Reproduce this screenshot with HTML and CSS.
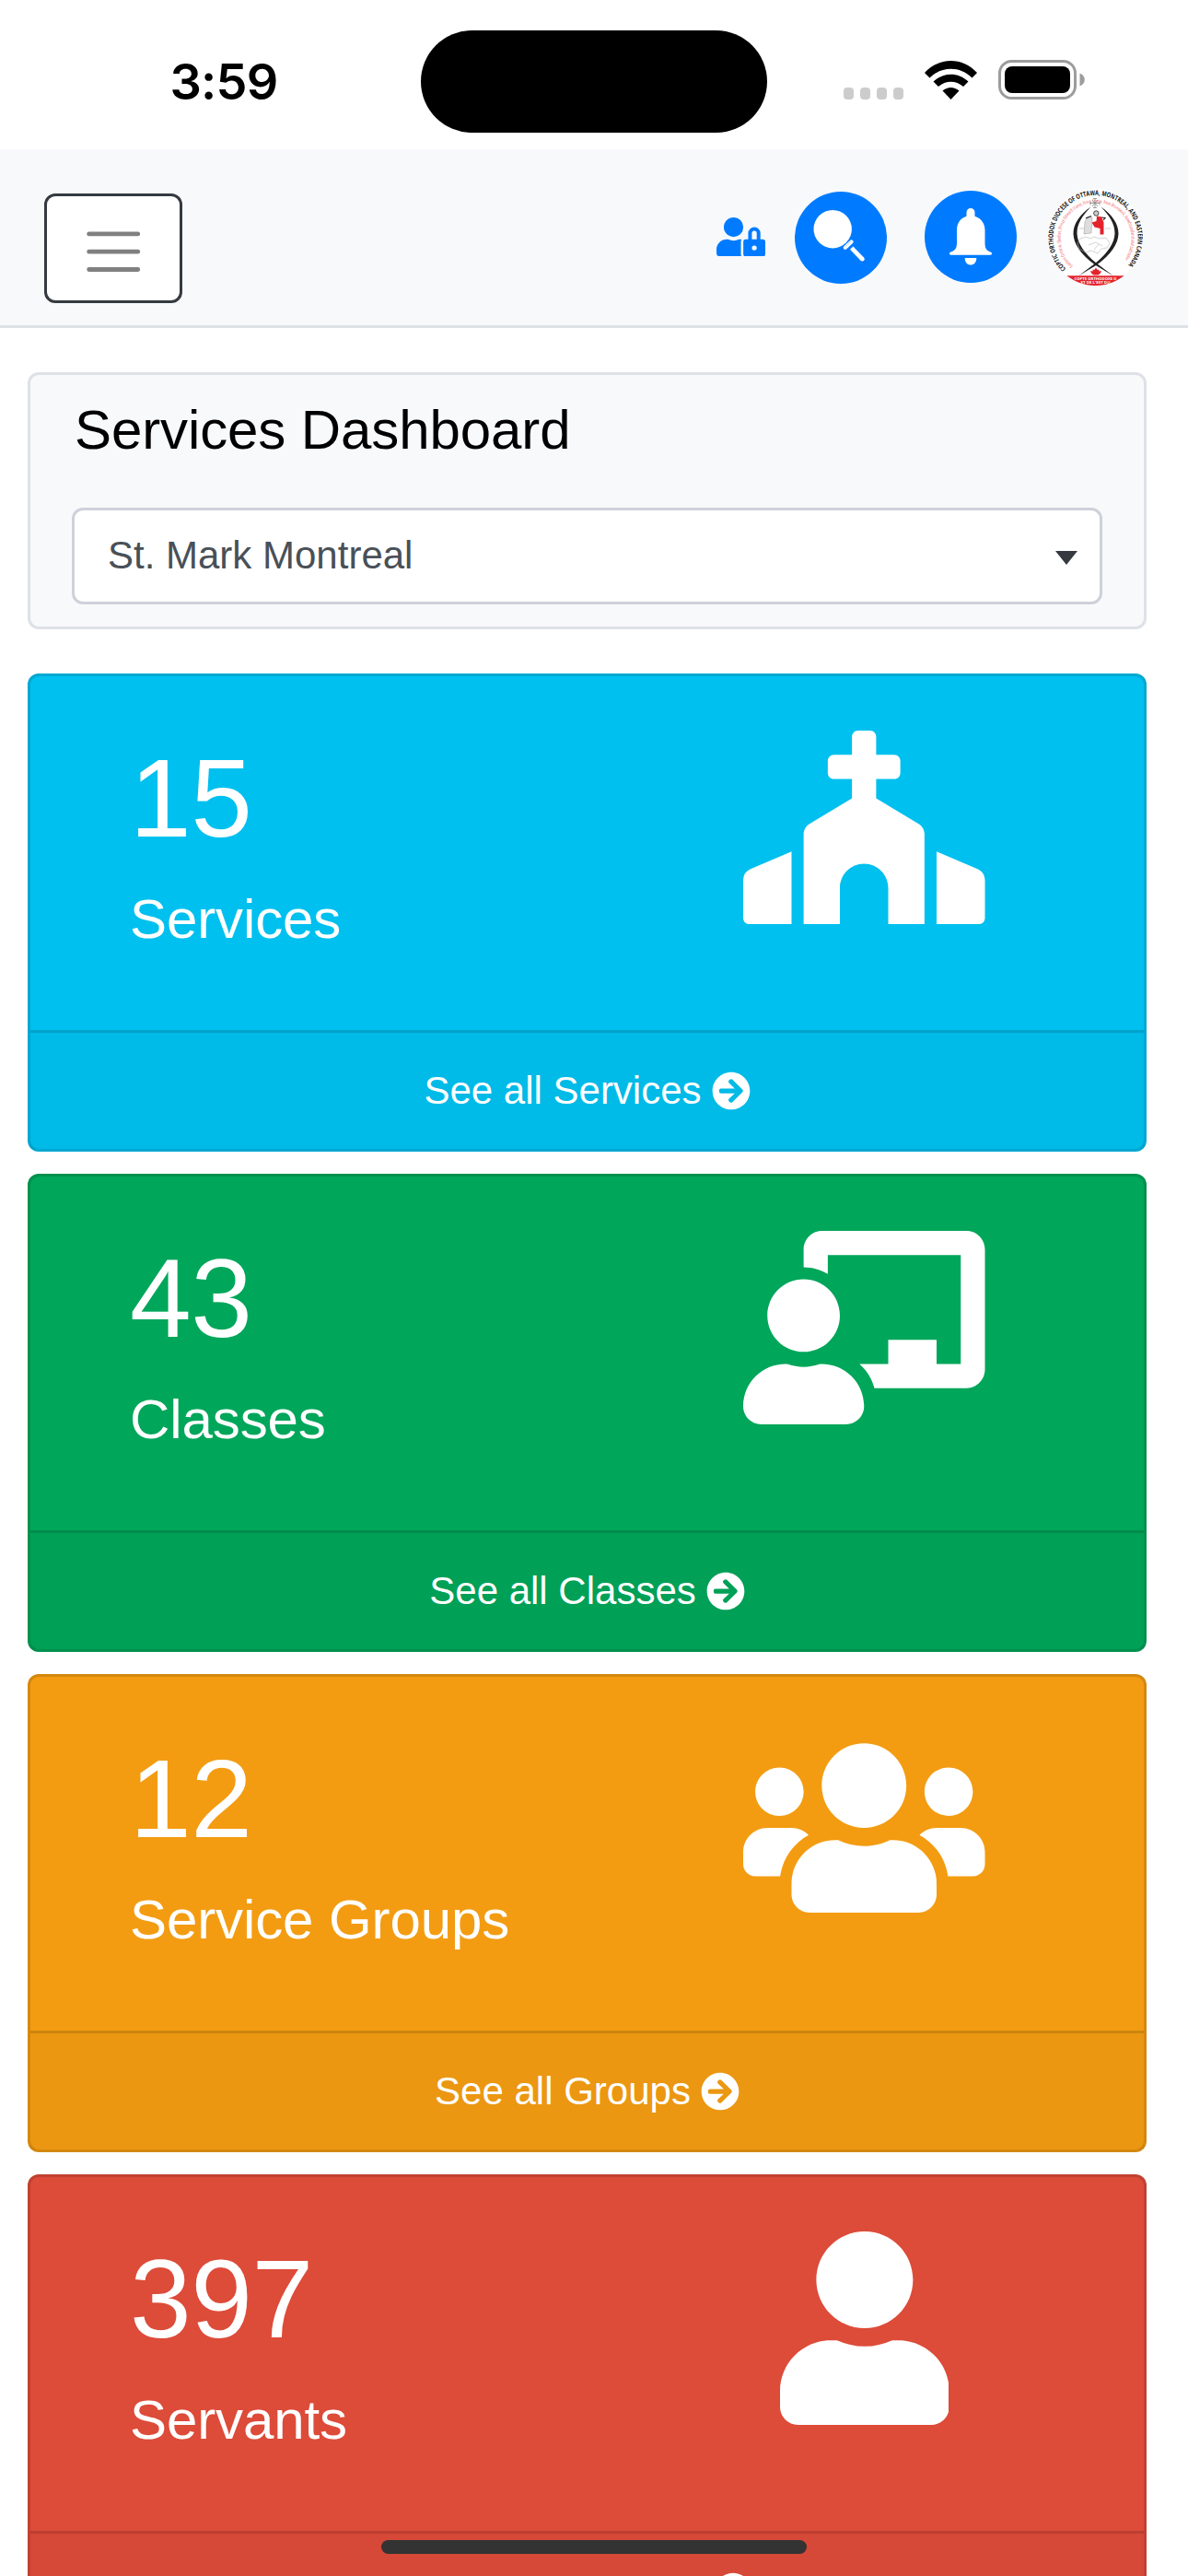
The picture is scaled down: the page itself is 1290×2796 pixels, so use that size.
FILE: index.html
```html
<!DOCTYPE html>
<html lang="en">
<head>
    <meta charset="UTF-8">
    <meta name="viewport" content="width=device-width, initial-scale=1.0">
    <title>Services Dashboard</title>
    <link rel="stylesheet" href="styles.css">
</head>
<body>

    <!-- Status bar -->
    <div class="status-bar">
        <div class="status-time">3:59</div>
        <div class="island"></div>
        <div class="status-icons">
            <div class="signal"><span></span><span></span><span></span><span></span></div>
            <svg class="wifi" viewBox="0 0 57 42">
                <path d="M0 13C16-4.300 41-4.300 57 13L51.500 18.500C38.500 5.500 18.500 5.500 5.500 18.500z"/>
                <path d="M9.500 22.500C20.500 12 36.500 12 47.500 22.500L42 28C34 21 23 21 15 28z"/>
                <path d="M19.500 32.500C25 27.700 32 27.700 37.500 32.500L28.500 42z"/>
            </svg>
            <svg class="battery" viewBox="0 0 95 43">
                <rect x="1.500" y="1.500" width="82" height="40" rx="13" fill="none" stroke="#9c9c9c" stroke-width="3"/>
                <rect x="7" y="7" width="71" height="29" rx="8"/>
                <path d="M88.500 14.500C95.500 17 95.500 26 88.500 28.500z" fill="#9c9c9c"/>
            </svg>
        </div>
    </div>

    <!-- Navbar -->
    <nav class="navbar">
        <button class="navbar-toggler">
            <svg viewBox="0 0 30 30"><path d="M4 7h22M4 15h22M4 23h22"/></svg>
        </button>
        <div class="nav-links">
            <svg class="user-lock" viewBox="0 0 640 512"><path d="M224 256A128 128 0 1 0 96 128a128 128 0 0 0 128 128zm96 64a63.080 63.080 0 0 1 8.100-30.500c-4.800-.5-9.500-1.500-14.500-1.500h-16.700a174.080 174.080 0 0 1-145.800 0h-16.700A134.430 134.430 0 0 0 0 422.400V464a48 48 0 0 0 48 48h280.900a63.540 63.540 0 0 1-8.900-32zm288-32h-32v-80a80 80 0 0 0-160 0v80h-32a32 32 0 0 0-32 32v160a32 32 0 0 0 32 32h224a32 32 0 0 0 32-32V320a32 32 0 0 0-32-32zM496 432a32 32 0 1 1 32-32 32 32 0 0 1-32 32zm32-144h-64v-80a32 32 0 0 1 64 0z"/></svg>
            <svg class="round-icon search" viewBox="0 0 100 100">
                <circle class="disc" cx="50" cy="50" r="50"/>
                <circle cx="41.200" cy="40.700" r="20.700"/>
                <path d="M61.500 54.500L54.800 60.800" stroke-width="4.200" stroke-linecap="round"/>
                <path class="gap" d="M61 54L54 60.500" stroke-width=".6"/>
                <path d="M61.700 61.200L73.300 73.200" stroke-width="4.800"/>
                <circle cx="73.300" cy="73.200" r="2.400"/>
            </svg>
            <svg class="round-icon bell" viewBox="0 0 100 100">
                <circle class="disc" cx="50" cy="50" r="50"/>
                <path d="M45.500 27.700V23.500a4.500 4.500 0 0 1 9 0v4.200C61.500 30 65.500 35.500 65.500 43v14c0 5.500 2 8.500 6 9.500 2 .4 2 3.300 0 3.300h-43c-2 0-2-2.900 0-3.300 4-1 6.500-4 6.500-9.500V43c0-7.500 3.500-13 10.500-15.300z"/>
                <path d="M43.700 73h12.600c.3 10-12.900 10-12.600 0z"/>
            </svg>
            <!-- Diocese logo -->
            <svg class="logo" viewBox="0 0 103 105">
                <defs>
                    <clipPath id="logoClip"><ellipse cx="51.500" cy="52.500" rx="51.500" ry="52.500"/></clipPath>
                    <path id="outerArc" d="M19.600 86.800A46 46.500 0 1 1 83.600 86.800"/>
                    <path id="innerArc" d="M27 83.500A38.500 39 0 1 1 77 83.500"/>
                </defs>
                <g clip-path="url(#logoClip)">
                    <rect width="103" height="105" fill="#fff"/>
                    <path d="M16 94.300h71V105H16z" fill="#e3222b"/>
                    <text class="logo-outer"><textPath href="#outerArc" textLength="214" lengthAdjust="spacingAndGlyphs">COPTIC ORTHODOX DIOCESE OF OTTAWA, MONTREAL, AND EASTERN CANADA</textPath></text>
                    <text class="logo-inner"><textPath href="#innerArc" textLength="179" lengthAdjust="spacingAndGlyphs">Eastern Ontario, Quebec, Prince Edward Island, Nova Scotia, New Brunswick, Newfoundland and Labrador</textPath></text>
                    <text class="logo-band" x="51.500" y="98.600" text-anchor="middle" textLength="46" lengthAdjust="spacingAndGlyphs">COPTE ORTHODOXE D</text>
                    <text class="logo-band" x="51.500" y="103.400" text-anchor="middle" textLength="32" lengthAdjust="spacingAndGlyphs">ET DE L'EST DU</text>
                    <path d="M51 10.500v10M46 15.500h10M48 12l6 7M54 12l-6 7M49 10.500h4M49 20.500h4M46 13.500v4M56 13.500v4" fill="none" stroke="#888" stroke-width=".8"/>
                    <path d="M46.500 19.500C20.500 38 20.500 60 51 82.500L71 94.500 53 81C24.500 57.500 26.500 40 46.500 19.500z" fill="#222"/>
                    <path d="M57.500 19.500C83.500 38 83.500 60 53 82.500L33 94.500 51 81C79.500 57.500 77.500 40 57.500 19.500z" fill="#222"/>
                    <path d="M35 54l6-2 5 2 4-2 6 2 7-1 4 6-3 5-6 1-4 5-7-3-6 2-7-4-2-6zM44 61l8-3 7 4M50 66l5-6" fill="none" stroke="#b5b5b5" stroke-width=".6"/>
                    <path d="M43 30l5 1-1 17-8 1 1-13zM34 43h5M62 43h6" fill="#ddd" stroke="#999" stroke-width=".5"/>
                    <circle cx="52.300" cy="26.500" r="2.700" fill="#ccc" stroke="#222" stroke-width=".8"/>
                    <path d="M41 32l6-2.500M57 31l5 .5-2 2.500" fill="none" stroke="#222" stroke-width="1.200"/>
                    <path d="M53 29.500l5 1 2.500 6v13h-4V43l-6-1.500-3-5 5-1.500z" fill="#e3222b"/>
                    <path d="M52 85.500l1.700 2.500 1.600-.5.200 2 2.500-.5-1 2.500-2.500 2h-5l-2.500-2-1-2.500 2.500.5.200-2 1.600.5z" fill="#e3222b"/>
                </g>
            </svg>
        </div>
    </nav>

    <main class="container">
        <div class="panel">
            <h4>Services Dashboard</h4>
            <div class="select">
                <span>St. Mark Montreal</span>
                <span class="caret"></span>
            </div>
        </div>

        <div class="card bg-aqua">
            <div class="card-body">
                <div>
                    <div class="count">15</div>
                    <div class="label">Services</div>
                </div>
                <svg class="card-icon" viewBox="0 0 640 512"><path d="M464.420 246.680L352 179.200V128h48c8.840 0 16-7.160 16-16V80c0-8.840-7.160-16-16-16h-48V16c0-8.840-7.160-16-16-16h-32c-8.840 0-16 7.160-16 16v48h-48c-8.840 0-16 7.160-16 16v32c0 8.840 7.160 16 16 16h48v51.200l-112.420 67.480c-9.640 5.780-15.580 16.200-15.580 27.440V512h96v-96c0-35.350 28.650-64 64-64s64 28.650 64 64v96h96V274.120c0-11.240-5.900-21.660-15.580-27.440zM0 395.960V496c0 8.840 7.160 16 16 16h112V320L19.390 366.540A32.024 32.024 0 0 0 0 395.960zm620.610-29.420L512 320v192h112c8.840 0 16-7.160 16-16V395.960c0-12.800-7.630-24.370-19.390-29.420z"/></svg>
            </div>
            <div class="card-footer">See all Services <svg viewBox="0 0 512 512"><path id="arrowCircle" d="M256 8c137 0 248 111 248 248S393 504 256 504 8 393 8 256 119 8 256 8zm-28.900 143.600l75.500 72.400H120c-13.300 0-24 10.700-24 24v16c0 13.300 10.700 24 24 24h182.600l-75.500 72.400c-9.700 9.300-9.900 24.800-.4 34.300l11 10.900c9.400 9.400 24.600 9.400 33.900 0L404.300 273c9.400-9.400 9.400-24.600 0-33.900L271.600 106.300c-9.400-9.400-24.600-9.400-33.900 0l-11 10.900c-9.500 9.600-9.300 25.100.4 34.400z"/></svg></div>
        </div>

        <div class="card bg-green">
            <div class="card-body">
                <div>
                    <div class="count">43</div>
                    <div class="label">Classes</div>
                </div>
                <svg class="card-icon" viewBox="0 0 640 512"><path d="M208 352c-2.390 0-4.780.35-7.060 1.090C187.980 357.300 174.350 360 160 360c-14.350 0-27.980-2.700-40.950-6.910-2.280-.74-4.660-1.090-7.050-1.090C49.940 352-.33 402.480 0 464.620.14 490.880 21.730 512 48 512h224c26.270 0 47.860-21.120 48-47.380.33-62.140-49.940-112.620-112-112.620zm-48-32c53.020 0 96-42.980 96-96s-42.980-96-96-96-96 42.980-96 96 42.980 96 96 96zM592 0H208c-26.470 0-48 22.250-48 49.590V96c23.420 0 45.100 6.780 64 17.800V64h352v288h-64v-64H384v64h-76.240c19.100 16.690 33.120 38.730 39.690 64H592c26.470 0 48-22.250 48-49.590V49.590C640 22.250 618.470 0 592 0z"/></svg>
            </div>
            <div class="card-footer">See all Classes <svg viewBox="0 0 512 512"><use href="#arrowCircle"/></svg></div>
        </div>

        <div class="card bg-yellow">
            <div class="card-body">
                <div>
                    <div class="count">12</div>
                    <div class="label">Service Groups</div>
                </div>
                <svg class="card-icon" viewBox="0 0 640 512"><path d="M96 224c35.300 0 64-28.700 64-64s-28.700-64-64-64-64 28.700-64 64 28.700 64 64 64zm448 0c35.300 0 64-28.700 64-64s-28.700-64-64-64-64 28.700-64 64 28.700 64 64 64zm32 32h-64c-17.600 0-33.500 7.100-45.100 18.600 40.300 22.100 68.900 62 75.100 109.400h66c17.700 0 32-14.300 32-32v-32c0-35.300-28.700-64-64-64zm-256 0c61.900 0 112-50.100 112-112S381.900 32 320 32 208 82.100 208 144s50.100 112 112 112zm76.800 32h-8.300c-20.800 10-43.900 16-68.500 16s-47.600-6-68.500-16h-8.300C179.600 288 128 339.600 128 403.200V432c0 26.500 21.500 48 48 48h288c26.500 0 48-21.500 48-48v-28.800c0-63.600-51.600-115.200-115.200-115.200zm-223.700-13.400C161.500 263.100 145.600 256 128 256H64c-35.300 0-64 28.700-64 64v32c0 17.700 14.300 32 32 32h65.900c6.300-47.400 34.900-87.300 75.200-109.400z"/></svg>
            </div>
            <div class="card-footer">See all Groups <svg viewBox="0 0 512 512"><use href="#arrowCircle"/></svg></div>
        </div>

        <div class="card bg-red">
            <div class="card-body">
                <div>
                    <div class="count">397</div>
                    <div class="label">Servants</div>
                </div>
                <svg class="card-icon" viewBox="0 0 448 512"><path d="M224 256c70.700 0 128-57.300 128-128S294.700 0 224 0 96 57.300 96 128s57.300 128 128 128zm89.600 32h-16.700c-22.200 10.200-46.900 16-72.900 16s-50.600-5.800-72.900-16h-16.700C60.200 288 0 348.200 0 422.400V464c0 26.500 21.500 48 48 48h352c26.500 0 48-21.500 48-48v-41.600c0-74.200-60.200-134.400-134.400-134.400z"/></svg>
            </div>
            <div class="card-footer">See all Servants <svg viewBox="0 0 512 512"><use href="#arrowCircle"/></svg></div>
        </div>
    </main>

    <div class="home-indicator"></div>

</body>
</html>
```
FILE: styles.css
```css
* {
    box-sizing: border-box;
}

body {
    position: relative;
    margin: 0;
    height: 2796px;
    overflow: hidden;
    background: #fff;
    color: #000;
    font-family: "Liberation Sans", Arial, sans-serif;
    font-size: 42px;
}

svg {
    display: block;
    flex: none;
}

/* Status bar */
.status-bar {
    display: grid;
    grid-template-columns: 457px 376px 1fr;
    height: 162px;
    padding-top: 33px;
}

.status-time {
    padding-left: 29px;
    font-family: Inter, sans-serif;
    font-size: 54px;
    font-weight: 600;
    line-height: 111px;
    text-align: center;
    letter-spacing: -0.8px;
}

.island {
    height: 111px;
    border-radius: 56px;
    background: #000;
}

.status-icons {
    display: flex;
    height: 107px;
    padding-left: 83px;
    align-items: center;
}

.signal {
    display: flex;
    gap: 6.7px;
    margin-top: 30px;
}

.signal span {
    width: 11.3px;
    height: 13.5px;
    border-radius: 4px;
    background: #ccc;
}

.wifi {
    width: 57px;
    height: 42px;
    margin-left: 22.7px;
}

.battery {
    width: 95px;
    height: 43px;
    margin-left: 23px;
}

/* Navbar */
.navbar {
    display: flex;
    justify-content: space-between;
    height: 194px;
    padding: 42px 49px 0 48px;
    background: #f8f9fb;
    border-bottom: 3px solid #dee2e6;
}

.navbar-toggler {
    width: 150px;
    height: 119px;
    margin-top: 6px;
    padding: 7px 0 0;
    background: #fff;
    border: 3px solid #343a40;
    border-radius: 12px;
}

.navbar-toggler svg {
    width: 72.4px;
    height: 72.4px;
    margin: 0 auto;
    fill: none;
    stroke: #808080;
    stroke-width: 2;
    stroke-linecap: round;
}

.nav-links {
    display: flex;
    align-items: flex-start;
}

.user-lock {
    width: 53px;
    height: 42.4px;
    margin: 32px 32px 0 0;
    fill: #007bff;
}

.round-icon {
    width: 100px;
    height: 100px;
    fill: #fff;
    stroke: none;
}

.round-icon path[stroke-width] {
    fill: none;
    stroke: #fff;
}

.round-icon path.gap {
    stroke: #8fc4ff;
}

.round-icon .disc {
    fill: #007bff;
}

.search {
    margin: 3.5px 41px 0 0;
}

.bell {
    margin: 2.5px 34px 0 0;
}

.logo {
    width: 103px;
    height: 105px;
    margin-top: 1px;
}

.logo-outer {
    font: 700 7.4px "Open Sans", sans-serif;
    fill: #111;
}

.logo-inner {
    font: 400 5.2px "Open Sans", sans-serif;
    fill: #f0565c;
}

.logo-band {
    font: 700 3.6px "Open Sans", sans-serif;
    fill: #fff;
}

/* Dashboard */
.container {
    display: flex;
    flex-direction: column;
    gap: 24px;
    padding: 48px 45px 0 30px;
}

.panel {
    height: 279px;
    margin-bottom: 24px;
    padding: 24px 45px;
    background: #f8f9fb;
    border: 3px solid #dee1e6;
    border-radius: 12px;
}

.panel h4 {
    margin: 0 3px 48px;
    font-size: 60px;
    font-weight: 400;
    line-height: 72px;
    letter-spacing: -0.1px;
}

.select {
    display: flex;
    align-items: center;
    justify-content: space-between;
    height: 105px;
    padding: 0 24px 2px 36px;
    background: #fff;
    border: 3px solid #ced1d9;
    border-radius: 12px;
    color: #495057;
    line-height: 63px;
}

.caret {
    margin-top: 5px;
    border: 12px solid transparent;
    border-top: 15px solid #343a40;
    border-bottom: 0;
}

.card {
    flex: none;
    border: 3px solid rgba(0, 0, 0, 0.125);
    border-radius: 12px;
    color: #fff;
}

.card-body {
    display: grid;
    grid-template-columns: 1fr 263px;
    height: 384px;
    padding: 60px 172px 0 108px;
}

.count {
    font-size: 120px;
    line-height: 144px;
    margin-bottom: 24px;
    letter-spacing: -0.5px;
}

.label {
    font-size: 60px;
    line-height: 72px;
    letter-spacing: -0.1px;
}

.card-icon {
    height: 210px;
    margin: -1px auto 0;
    fill: #fff;
}

.card-footer {
    display: flex;
    align-items: center;
    justify-content: center;
    gap: 11px;
    height: 129px;
    background: rgba(0, 0, 0, 0.03);
    border-top: 3px solid rgba(0, 0, 0, 0.125);
}

.card-footer svg {
    width: 42px;
    height: 42px;
    margin-top: -1px;
    fill: #fff;
}

.bg-aqua {
    background-color: #00c0ef;
}

.bg-green {
    background-color: #00a65a;
}

.bg-yellow {
    background-color: #f39c12;
}

.bg-red {
    background-color: #dd4b39;
}

.home-indicator {
    position: absolute;
    left: 414px;
    bottom: 24px;
    width: 462px;
    height: 15px;
    border-radius: 8px;
    background: #333;
}
```
